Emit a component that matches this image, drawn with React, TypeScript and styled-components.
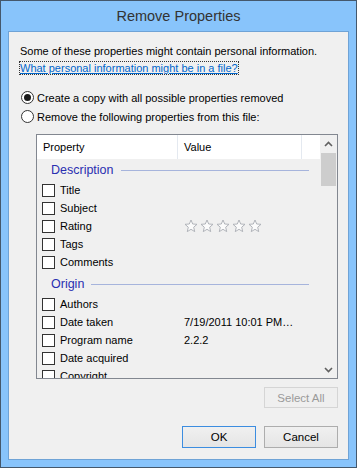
import React from 'react';
import styled, { createGlobalStyle } from 'styled-components';

const GlobalStyle = createGlobalStyle`
  html, body {
    margin: 0;
    padding: 0;
    background: #ffffff;
  }
  body {
    font-family: "Liberation Sans", Arial, sans-serif;
    font-size: 11px;
    color: #000;
  }
`;

const Window = styled.div`
  width: 357px;
  height: 468px;
  box-sizing: border-box;
  border: 1px solid #44586c;
  background: #88c4fb;
  display: flex;
  flex-direction: column;
  padding: 0 7px 7px 7px;
`;

const TitleBar = styled.div`
  height: 30px;
  display: flex;
  align-items: center;
  justify-content: center;
  font-size: 14.5px;
  color: #333;
  padding-bottom: 1px;
  box-sizing: border-box;
`;

const Client = styled.div`
  flex: 1;
  border: 1px solid #6fa3d6;
  background: #f0f0f0;
  display: flex;
  flex-direction: column;
  padding: 11px 10px 0 11px;
`;

const Intro = styled.div`
  line-height: 17px;
  color: #000;
  white-space: nowrap;
`;

const HelpLink = styled.a`
  color: #0066cc;
  text-decoration: underline;
  outline: 1px dotted #333;
  outline-offset: 0;
  cursor: pointer;
`;

const Options = styled.div`
  margin-top: 12px;
  display: flex;
  flex-direction: column;
  gap: 2px;
`;

const RadioRow = styled.label`
  display: flex;
  align-items: center;
  height: 17px;
  gap: 3px;
  white-space: nowrap;
`;

const RadioDot = styled.span<{ $checked?: boolean }>`
  width: 11px;
  height: 11px;
  border: 1px solid #333;
  border-radius: 50%;
  background: #fff;
  position: relative;
  margin-left: 1px;
  &::after {
    content: '';
    display: ${(p) => (p.$checked ? 'block' : 'none')};
    position: absolute;
    left: 2px;
    top: 2px;
    width: 7px;
    height: 7px;
    border-radius: 50%;
    background: #1a1a1a;
  }
`;

const ListBox = styled.div`
  margin: 9px 0 0 16px;
  height: 245px;
  flex: none;
  box-sizing: border-box;
  border: 1px solid #828790;
  display: flex;
  overflow: hidden;
`;

const ListMain = styled.div`
  flex: 1;
  display: flex;
  flex-direction: column;
  overflow: hidden;
`;

const Header = styled.div`
  height: 24px;
  flex: none;
  background: #fff;
  display: grid;
  grid-template-columns: 141px 1fr 18px;
`;

const HeaderCell = styled.div<{ $last?: boolean }>`
  display: flex;
  align-items: center;
  padding-left: ${(p) => (p.$last ? 0 : 6)}px;
  border-right: ${(p) => (p.$last ? 'none' : '1px solid #e4e9f0')};
`;

const GroupHeader = styled.div<{ $first?: boolean }>`
  height: 22px;
  margin-top: ${(p) => (p.$first ? 0 : 2)}px;
  display: flex;
  align-items: center;
  gap: 7px;
  padding: 0 11px 0 14px;
  color: #2a2fb0;
  font-size: 12.5px;
  flex: none;
`;

const GroupLine = styled.div`
  flex: 1;
  height: 1px;
  background: #a6b4dc;
`;

const Row = styled.div`
  height: 18px;
  flex: none;
  display: grid;
  grid-template-columns: 142px 1fr;
  align-items: center;
  padding-left: 5px;
`;

const PropCell = styled.div`
  display: flex;
  align-items: center;
  gap: 5px;
  white-space: nowrap;
`;

const CheckBox = styled.span`
  width: 11px;
  height: 11px;
  border: 1px solid #333;
  background: #fff;
  flex: none;
`;

const ValueCell = styled.div`
  white-space: nowrap;
  display: flex;
  align-items: center;
`;

const Stars = styled.div`
  display: flex;
  gap: 2px;
`;

const ScrollBar = styled.div`
  width: 17px;
  flex: none;
  background: #f0f0f0;
  display: flex;
  flex-direction: column;
  align-items: center;
`;

const ArrowBox = styled.div`
  height: 17px;
  width: 17px;
  display: flex;
  align-items: center;
  justify-content: center;
  flex: none;
`;

const Track = styled.div`
  flex: 1;
  width: 100%;
  display: flex;
  justify-content: center;
  padding-top: 1px;
`;

const Thumb = styled.div`
  width: 15px;
  height: 33px;
  background: #cdcdcd;
`;

const SelectRow = styled.div`
  display: flex;
  justify-content: flex-end;
  margin-top: 8px;
`;

const Footer = styled.div`
  display: flex;
  justify-content: flex-end;
  gap: 8px;
  margin-top: 18px;
`;

const Button = styled.button<{ $primary?: boolean; $height?: number }>`
  width: 74px;
  height: ${(p) => p.$height ?? 22}px;
  box-sizing: border-box;
  font-family: inherit;
  font-size: 11.5px;
  padding: 0;
  color: #000;
  border: 1px solid ${(p) => (p.$primary ? '#3c8de0' : '#adadad')};
  background: linear-gradient(#f0f0f0, #e5e5e5);
  &:disabled {
    color: #9a9a9a;
    border-color: #d5d5d5;
    background: #efefef;
  }
`;

const Star = () => (
  <svg width="14" height="14" viewBox="0 0 14 14">
    <path
      d="M7 1 L8.7 5 L13 5.3 L9.7 8.2 L10.7 12.6 L7 10.3 L3.3 12.6 L4.3 8.2 L1 5.3 L5.3 5 Z"
      fill="#fbfbfb"
      stroke="#a9adb3"
      strokeWidth="0.9"
      strokeLinejoin="round"
    />
  </svg>
);

const Chevron = ({ up }: { up?: boolean }) => (
  <svg width="9" height="6" viewBox="0 0 9 6">
    <path
      d={up ? 'M1 5 L4.5 1.5 L8 5' : 'M1 1 L4.5 4.5 L8 1'}
      fill="none"
      stroke="#606060"
      strokeWidth="1.6"
    />
  </svg>
);

type Prop = { name: string; value?: React.ReactNode };

const groups: { title: string; items: Prop[] }[] = [
  {
    title: 'Description',
    items: [
      { name: 'Title' },
      { name: 'Subject' },
      {
        name: 'Rating',
        value: (
          <Stars>
            {[0, 1, 2, 3, 4].map((i) => (
              <Star key={i} />
            ))}
          </Stars>
        ),
      },
      { name: 'Tags' },
      { name: 'Comments' },
    ],
  },
  {
    title: 'Origin',
    items: [
      { name: 'Authors' },
      { name: 'Date taken', value: '7/19/2011 10:01 PM…' },
      { name: 'Program name', value: '2.2.2' },
      { name: 'Date acquired' },
      { name: 'Copyright' },
    ],
  },
];

export default function App() {
  return (
    <>
      <GlobalStyle />
      <Window>
        <TitleBar>Remove Properties</TitleBar>
        <Client>
          <Intro>
            Some of these properties might contain personal information.
            <br />
            <HelpLink>What personal information might be in a file?</HelpLink>
          </Intro>
          <Options>
            <RadioRow>
              <RadioDot $checked />
              Create a copy with all possible properties removed
            </RadioRow>
            <RadioRow>
              <RadioDot />
              Remove the following properties from this file:
            </RadioRow>
          </Options>
          <ListBox>
            <ListMain>
              <Header>
                <HeaderCell>Property</HeaderCell>
                <HeaderCell>Value</HeaderCell>
                <HeaderCell $last />
              </Header>
              {groups.map((g, gi) => (
                <React.Fragment key={g.title}>
                  <GroupHeader $first={gi === 0}>
                    {g.title}
                    <GroupLine />
                  </GroupHeader>
                  {g.items.map((it) => (
                    <Row key={it.name}>
                      <PropCell>
                        <CheckBox />
                        {it.name}
                      </PropCell>
                      <ValueCell>{it.value}</ValueCell>
                    </Row>
                  ))}
                </React.Fragment>
              ))}
            </ListMain>
            <ScrollBar>
              <ArrowBox>
                <Chevron up />
              </ArrowBox>
              <Track>
                <Thumb />
              </Track>
              <ArrowBox>
                <Chevron />
              </ArrowBox>
            </ScrollBar>
          </ListBox>
          <SelectRow>
            <Button disabled $height={21}>
              Select All
            </Button>
          </SelectRow>
          <Footer>
            <Button $primary>OK</Button>
            <Button>Cancel</Button>
          </Footer>
        </Client>
      </Window>
    </>
  );
}
